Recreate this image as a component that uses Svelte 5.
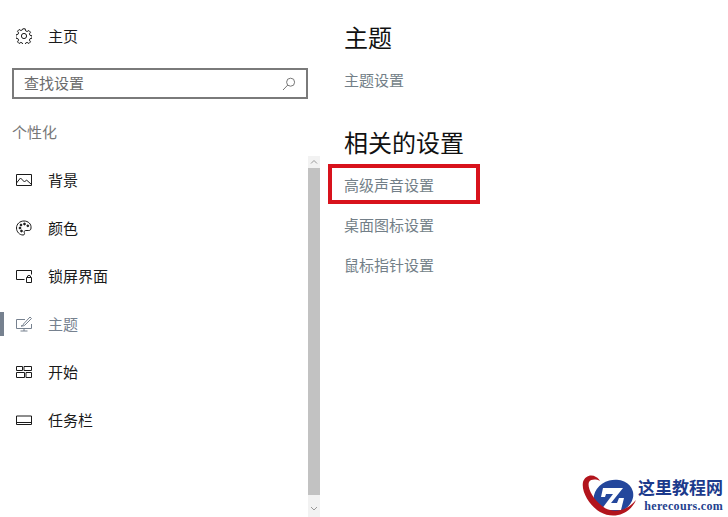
<script lang="ts">
  // Settings > Personalisation page, sidebar nav plus the related-settings links
  const navItems = [
    { id: "bg", label: "背景" },
    { id: "color", label: "颜色" },
    { id: "lock", label: "锁屏界面" },
    { id: "theme", label: "主题", active: true },
    { id: "start", label: "开始" },
    { id: "taskbar", label: "任务栏" }
  ];
  const related = ["高级声音设置", "桌面图标设置", "鼠标指针设置"];
</script>

<div class="page">
  <aside class="side">
    <div class="home">
      <svg class="icon" viewBox="0 0 16 16" fill="none" stroke="currentColor" stroke-width="1">
        <circle cx="8" cy="8" r="2.600" />
        <path d="M6.800.8h2.400l.4 2 1.500.7 1.800-1 1.600 1.700-1.100 1.700.7 1.500 2 .4v2.400l-2 .4-.7 1.500 1.100 1.800-1.600 1.600-1.800-1.100-1.500.7-.4 2H6.800l-.4-2-1.500-.7-1.800 1.100-1.600-1.600 1.100-1.800-.7-1.500-2-.4V6.800l2-.4.7-1.500-1.100-1.700 1.600-1.700 1.800 1 1.500-.7z" />
      </svg>
      <span>主页</span>
    </div>
    <div class="search">
      <span>查找设置</span>
      <svg viewBox="0 0 14 14" fill="none" stroke="#777" stroke-width="1">
        <circle cx="8.600" cy="5.200" r="4" />
        <path d="M5.800 8 1 13" />
      </svg>
    </div>
    <div class="group">个性化</div>
    <div class="navwrap">
      <nav>
        {#each navItems as item (item.id)}
          <div class="row" class:active={item.active}>
            <svg class="icon" viewBox="0 0 16 16" fill="none" stroke="currentColor" stroke-width="1">
              {#if item.id === "bg"}
                <path d="M.5 2.500h15v11H.5zM.5 11l4-5 4 4 2-2 5 4.500" />
              {:else if item.id === "color"}
                <path d="M8 1C3.800 1 .5 4 .5 8c0 3.800 3 7 6.500 7 1.700 0 1.800-1.300 1.300-2.300-.6-1.200.2-2.200 1.500-2.200h3c1.500 0 2.200-1 2.200-2.500C15.500 4 12.200 1 8 1z" />
                <circle cx="4" cy="8" r=".9" fill="currentColor" />
                <circle cx="5" cy="5" r=".9" fill="currentColor" />
                <circle cx="8.500" cy="4" r=".9" fill="currentColor" />
                <circle cx="11.800" cy="5.800" r=".9" fill="currentColor" />
                <circle cx="5.500" cy="11" r=".9" fill="currentColor" />
              {:else if item.id === "lock"}
                <path d="M15.500 6.500V2.500H.5v9h8" />
                <path d="M10.500 9.500h5v5h-5zM11.500 9.500V8a2 1.500 0 0 1 3 0v1.500" />
              {:else if item.id === "theme"}
                <path d="M9 3.500H.5v9h15V8M8 12.500v2.500M4.500 15h7" />
                <path d="M5 10c1.500 0 2-.6 2.500-2l6.500-7 1.500 1.500-6.500 6.500c-1 1-2.500 1-4 1z" />
              {:else if item.id === "start"}
                <path d="M.5 2.500h6v4h-6zM8 2.500h7.500v4H8zM.5 8.500h8v5h-8zM10 8.500h5.500v5H10z" />
              {:else}
                <path d="M.5 4h15v8.500H.5zM.5 10.500h15" />
              {/if}
            </svg>
            <span>{item.label}</span>
          </div>
        {/each}
      </nav>
      <div class="scrollbar">
        <svg class="arrow" viewBox="0 0 12 12" fill="none" stroke="#999"><path d="M3 7.500l3-3 3 3" /></svg>
        <div class="thumb"></div>
        <svg class="arrow down" viewBox="0 0 12 22" fill="none" stroke="#999"><path d="M3 12l3 3 3-3" /></svg>
      </div>
    </div>
  </aside>

  <main>
    <h2>主题</h2>
    <a class="link" href="#top">主题设置</a>
    <h2 class="second">相关的设置</h2>
    <div class="links">
      {#each related as text, i (text)}
        <a class="link" class:marked={i === 0} href="#top">{text}</a>
      {/each}
    </div>
  </main>

  <div class="mark">
    <svg viewBox="0 0 70 47" width="70" height="47">
      <ellipse cx="35.500" cy="26.500" rx="20" ry="16.500" fill="#24479c" transform="rotate(-15 35.500 26.500)" />
      <path d="M25 18h20L33 33h6l2-5h5l-3 12H23l12-16h-7l-1 3h-4z" fill="#fff" />
      <path d="M5 12C7 6 13 4 18 7c2 1 3 2 4 4-4-2-9-2-11 1-2 5 3 16 13 24 10 8 24 6 34-6-6 14-22 20-36 12C12 36 3 22 5 12z" fill="#b2141c" />
    </svg>
    <div class="marktext">
      <div class="cn">这里教程网</div>
      <div class="en">herecours.com</div>
    </div>
  </div>
</div>

<style>
  :global(body) {
    margin: 0;
    background: #fff;
  }
  .page {
    position: relative;
    width: 728px;
    height: 517px;
    overflow: hidden;
    display: flex;
    font-family: "Noto Sans CJK SC", "Liberation Sans", sans-serif;
    font-size: 15px;
    line-height: 20px;
    color: #1a1a1a;
    background: #fff;
  }
  .side {
    flex: none;
    width: 320px;
    display: flex;
    flex-direction: column;
  }
  .icon {
    flex: none;
    width: 16px;
    height: 16px;
    margin-right: 16px;
  }
  .home {
    height: 48px;
    margin-top: 12px;
    margin-bottom: 8px;
    padding-left: 16px;
    display: flex;
    align-items: center;
  }
  .search {
    box-sizing: border-box;
    height: 31px;
    margin-left: 12px;
    width: 296px;
    border: 2px solid #7a7a7a;
    padding: 0 10px;
    display: flex;
    align-items: center;
    justify-content: space-between;
    color: #6b6b6b;
  }
  .search span {
    margin-top: -1px;
  }
  .search svg {
    width: 14px;
    height: 14px;
  }
  .group {
    margin: 23px 0 14px 12px;
    height: 20px;
    color: #777;
  }
  .navwrap {
    flex: 1;
    min-height: 0;
    display: flex;
  }
  nav {
    flex: 1;
  }
  .row {
    position: relative;
    height: 48px;
    padding-left: 16px;
    display: flex;
    align-items: center;
  }
  .row.active {
    color: #76818f;
  }
  .row.active::before {
    content: "";
    position: absolute;
    left: 0;
    top: 12px;
    width: 4px;
    height: 24px;
    background: #76818f;
  }
  .scrollbar {
    flex: none;
    width: 12px;
    display: flex;
    flex-direction: column;
    background: #f2f2f2;
  }
  .arrow {
    flex: none;
    width: 12px;
    height: 12px;
  }
  .arrow.down {
    height: 22px;
  }
  .thumb {
    flex: 1;
    background: #c2c2c2;
  }
  main {
    padding: 13px 0 0 24px;
    display: flex;
    flex-direction: column;
    align-items: flex-start;
  }
  h2 {
    margin: 0;
    font-size: 24px;
    line-height: 48px;
    font-weight: 400;
    color: #111;
  }
  .link {
    color: #737f88;
    text-decoration: none;
    height: 40px;
    line-height: 40px;
  }
  main > .link {
    line-height: 38px;
  }
  .second {
    margin-top: 19px;
    height: 44px;
    line-height: 44px;
  }
  .links {
    display: flex;
    flex-direction: column;
    padding-top: 1px;
  }
  .marked {
    position: relative;
  }
  .marked::after {
    content: "";
    position: absolute;
    left: -16px;
    top: -1px;
    width: 144px;
    height: 32px;
    border: 4px solid #d8121c;
  }
  .mark {
    position: absolute;
    left: 578px;
    top: 470px;
    display: flex;
    align-items: flex-start;
  }
  .marktext {
    margin-left: -10px;
    padding-top: 8px;
    font-weight: 700;
    color: #1c3a8c;
  }
  .cn {
    font-size: 17px;
    line-height: 18px;
    white-space: nowrap;
  }
  .en {
    margin-top: 4px;
    font-family: "Liberation Serif", serif;
    font-size: 12px;
    line-height: 12px;
    letter-spacing: 0.3px;
    text-align: right;
    color: #24418e;
  }
</style>
